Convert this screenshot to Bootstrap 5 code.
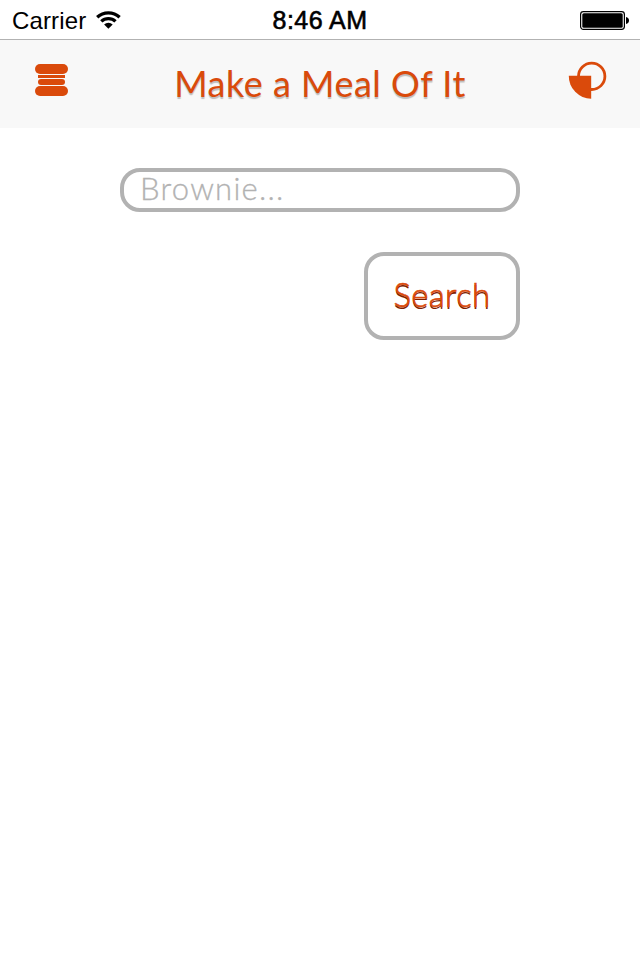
<!DOCTYPE html>
<html lang="en">
<head>
<meta charset="utf-8">
<meta name="viewport" content="width=device-width, initial-scale=1">
<title>Make a Meal Of It</title>
<link href="https://cdn.jsdelivr.net/npm/bootstrap@5.3.0/dist/css/bootstrap.min.css" rel="stylesheet">
<style>
  body { font-family: Lato, sans-serif; color: #000; }
  .app-screen { height: 960px; }
  .status-bar { height: 40px; padding: 0 11px; border-bottom: 1px solid #b2b2b2; font: 24px/41px "Liberation Sans", Arial, sans-serif; }
  .status-side { flex: 1 1 0; }
  .status-time { font-size: 25px; letter-spacing: .45px; line-height: 40px; -webkit-text-stroke: .6px #000; }
  .carrier-name { padding-left: 1px; letter-spacing: .15px; }
  .title-bar { height: 88px; background: #f8f8f8; padding: 0 33px 0 35px; }
  .title-side { width: 40px; }
  .app-title { font-size: 36px; line-height: 86px; font-weight: 400; color: #da4a0b; letter-spacing: .5px; padding-right: 2px; text-shadow: 0 2px 1px rgba(0,0,0,.24); }
  .search-form { width: 400px; gap: 40px; padding-top: 40px; }
  .search-input { height: 44px; border: 4px solid #b2b2b2; border-radius: 20px; padding: 0 16px 3px; font-size: 31px; font-weight: 300; letter-spacing: 1.25px; }
  .search-input::placeholder { color: #b2b2b2; opacity: 1; -webkit-text-stroke: .3px #b2b2b2; }
  .search-btn { width: 156px; height: 88px; border: 4px solid #b2b2b2; border-radius: 20px; padding: 0 0 2px; font-size: 33px; font-weight: 300; letter-spacing: .3px; color: #da4a0b; text-shadow: 0 1.5px 0 #7c2000; -webkit-text-stroke: .6px #da4a0b; }
</style>
</head>
<body>
<main class="app-screen d-flex flex-column bg-white overflow-hidden">
  <div class="status-bar d-flex flex-shrink-0">
    <div class="status-side d-flex align-items-start">
      <span class="carrier-name">Carrier</span>
      <svg class="wifi ms-2" width="28" height="39" viewBox="0 0 28 39" fill="none" stroke="#000" stroke-width="3.3">
        <path d="M3.2 17.2a16.4 16.4 0 0 1 22.4 0M7.3 21.4a10.3 10.3 0 0 1 14.2 0"/>
        <path d="M14.4 28.8l-4.3-4.3a6.2 6.2 0 0 1 8.6 0z" fill="#000" stroke="none"/>
      </svg>
    </div>
    <span class="status-time">8:46 AM</span>
    <div class="status-side d-flex justify-content-end">
      <svg width="49" height="39" viewBox="0 0 49 39">
        <rect x=".6" y="11.6" width="43.8" height="17.8" rx="2.8" fill="#fff" stroke="#000" stroke-width="1.2"/>
        <rect x="2.3" y="13.3" width="40.4" height="14.4" rx="1.5"/>
        <path d="M46 17q3 .8 3 3.5T46 24z"/>
      </svg>
    </div>
  </div>
  <header class="title-bar d-flex justify-content-between flex-shrink-0">
    <div class="title-side">
      <svg width="34" height="60" viewBox="0 0 34 60" fill="#da4a0b" class="d-block" aria-label="Menu">
        <rect y="24" width="33" height="10" rx="5"/>
        <rect x="3" y="35" width="27" height="3"/>
        <rect x="3" y="39" width="27" height="6" rx="3"/>
        <rect y="46" width="33" height="10" rx="5"/>
      </svg>
    </div>
    <h1 class="app-title mb-0 text-nowrap">Make a Meal Of It</h1>
    <div class="title-side">
      <svg width="40" height="62" viewBox="0 0 40 62" class="d-block" aria-label="Pie chart">
        <circle cx="24.7" cy="36.3" r="13.2" fill="none" stroke="#da4a0b" stroke-width="2.8"/>
        <path d="M1.8 35.7h22.4v23A22.6 22.6 0 0 1 1.8 35.7z" fill="#da4a0b"/>
      </svg>
    </div>
  </header>
  <form class="search-form d-flex flex-column align-items-end mx-auto">
    <input type="text" class="search-input form-control" placeholder="Brownie..." aria-label="Recipe">
    <button type="button" class="search-btn btn bg-white">Search</button>
  </form>
</main>
<script src="https://cdn.jsdelivr.net/npm/bootstrap@5.3.0/dist/js/bootstrap.bundle.min.js"></script>
</body>
</html>
